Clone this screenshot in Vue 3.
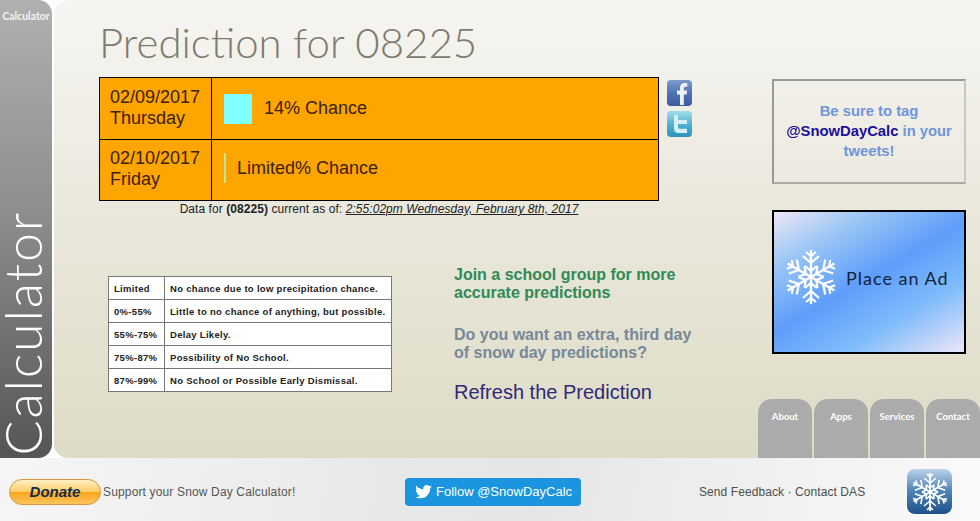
<template>
  <div class="page">
    <div class="top">
      <aside class="sidebar">
        <span class="side-small">Calculator</span>
        <span class="side-big">Calculator</span>
      </aside>

      <main class="panel">
        <div class="body">
          <div class="left">
            <h1 class="title">Prediction for 08225</h1>
            <div class="forecast-row">
              <div class="forecast">
                <div v-for="day in days" :key="day.date" class="day">
                  <div class="day-date">{{ day.date }}<br />{{ day.name }}</div>
                  <div class="day-chance">
                    <span class="swatch" :style="{ width: day.bar + 'px' }"></span>
                    <span>{{ day.chance }}</span>
                  </div>
                </div>
              </div>
              <div class="social">
                <svg width="25" height="26" viewBox="0 0 25 26">
                  <defs>
                    <linearGradient id="fbg" x1="0" y1="0" x2="0" y2="1">
                      <stop offset="0" stop-color="#7d9bc9" />
                      <stop offset="0.5" stop-color="#4f74b4" />
                      <stop offset="1" stop-color="#3b5b9f" />
                    </linearGradient>
                  </defs>
                  <rect width="25" height="26" rx="4" fill="url(#fbg)" />
                  <path d="M13 25V14.500h-3v-4h3V8c0-3.300 2-5 4.800-5 1.200 0 2.200.1 2.500.2v3.500h-1.900c-1.400 0-1.600.7-1.600 1.700v2.100h3.300l-.5 4h-2.800V25z" fill="#eef2f8" />
                </svg>
                <svg width="25" height="26" viewBox="0 0 25 26">
                  <defs>
                    <linearGradient id="twg" x1="0" y1="0" x2="0" y2="1">
                      <stop offset="0" stop-color="#a5dbe8" />
                      <stop offset="0.5" stop-color="#52b4d2" />
                      <stop offset="1" stop-color="#2a93b8" />
                    </linearGradient>
                  </defs>
                  <rect width="25" height="26" rx="4" fill="url(#twg)" />
                  <path d="M7 4h4v5h9v4h-9v3c0 1.200.6 1.700 1.800 1.700H20V22h-8.500C8.600 22 7 20.400 7 17.500z" fill="#d5eff6" />
                </svg>
              </div>
            </div>
            <p class="asof">
              Data for <b>(08225)</b> current as of:
              <u><i>2:55:02pm Wednesday, February 8th, 2017</i></u>
            </p>

            <div class="lower">
              <table class="legend">
                <tbody>
                  <tr v-for="row in legend" :key="row[0]">
                    <td>{{ row[0] }}</td>
                    <td>{{ row[1] }}</td>
                  </tr>
                </tbody>
              </table>
              <div class="links">
                <a class="link-green">Join a school group for more<br />accurate predictions</a>
                <a class="link-grey">Do you want an extra, third day<br />of snow day predictions?</a>
                <a class="link-refresh">Refresh the Prediction</a>
              </div>
            </div>
          </div>

          <div class="right">
            <div class="tag-box">
              Be sure to tag<br />
              <span class="handle">@SnowDayCalc</span> in your<br />
              tweets!
            </div>
            <div class="ad">
              <svg class="flake" width="54" height="56" viewBox="-27 -28 54 56">
                <g v-for="a in angles" :key="a" :transform="`rotate(${a})`" stroke="#fff" fill="none">
                  <path d="M0 0V-27" stroke-width="2.400" />
                  <path d="M-5 -25L0 -21L5 -25M-8 -21L0 -14L8 -21M-6 -11L0 -6L6 -11" stroke-width="2.200" />
                </g>
              </svg>
              <span class="ad-text">Place an Ad</span>
            </div>
          </div>
        </div>

        <nav class="tabs">
          <a v-for="tab in tabs" :key="tab" class="tab">{{ tab }}</a>
        </nav>
      </main>
    </div>

    <footer class="footer">
      <div class="donate-wrap">
        <button class="donate">Donate</button>
        <span class="support">Support your Snow Day Calculator!</span>
      </div>
      <a class="follow">
        <svg width="17" height="14" viewBox="0 0 24 20">
          <path d="M24 2.400c-.9.400-1.800.7-2.800.8 1-.6 1.800-1.600 2.200-2.700-1 .6-2 1-3.100 1.200C19.300.7 18 0 16.600 0c-2.700 0-4.900 2.200-4.900 4.900 0 .4 0 .8.100 1.100C7.700 5.800 4.100 3.900 1.700.9c-.4.700-.7 1.600-.7 2.500 0 1.700.9 3.200 2.200 4.100-.8 0-1.600-.2-2.200-.6v.1c0 2.400 1.700 4.400 3.900 4.800-.4.100-.8.200-1.300.2-.3 0-.6 0-.9-.1.600 2 2.400 3.400 4.600 3.400-1.700 1.300-3.800 2.100-6.100 2.100-.4 0-.8 0-1.200-.1C2.200 18.300 4.800 19.100 7.500 19.100c9.100 0 14-7.500 14-14v-.6c1-.7 1.800-1.600 2.500-2.100z" fill="#fff" />
        </svg>
        Follow @SnowDayCalc
      </a>
      <div class="contact">Send Feedback · Contact DAS</div>
      <div class="app-icon">
        <svg width="38" height="40" viewBox="-19 -20 38 40">
          <g v-for="a in angles" :key="a" :transform="`rotate(${a})`" stroke="#fff" fill="none">
            <path d="M0 0V-19" stroke-width="1.800" />
            <path d="M-3 -18L0 -15L3 -18M-6 -14L0 -9L6 -14M-4 -7L0 -4L4 -7" stroke-width="1.600" />
          </g>
        </svg>
      </div>
    </footer>
  </div>
</template>

<script setup>
const days = [
  { date: '02/09/2017', name: 'Thursday', chance: '14% Chance', bar: 28 },
  { date: '02/10/2017', name: 'Friday', chance: 'Limited% Chance', bar: 2 }
]

const legend = [
  ['Limited', 'No chance due to low precipitation chance.'],
  ['0%-55%', 'Little to no chance of anything, but possible.'],
  ['55%-75%', 'Delay Likely.'],
  ['75%-87%', 'Possibility of No School.'],
  ['87%-99%', 'No School or Possible Early Dismissal.']
]

const tabs = ['About', 'Apps', 'Services', 'Contact']
const angles = [0, 60, 120, 180, 240, 300]
</script>

<style>
html,
body {
  margin: 0;
  background: #fff;
}
</style>

<style scoped>
.page {
  width: 980px;
  height: 521px;
  overflow: hidden;
  display: flex;
  flex-direction: column;
  font-family: 'Liberation Sans', Arial, sans-serif;
  color: #000;
}

.top {
  height: 458px;
  display: flex;
  gap: 2px;
}

.sidebar {
  width: 52px;
  flex: none;
  box-sizing: border-box;
  border-radius: 0 14px 14px 0;
  background: linear-gradient(#b0b0b0, #8f8f8f 45%, #555 100%);
  color: #fff;
  display: flex;
  flex-direction: column;
  justify-content: space-between;
  align-items: center;
  font-family: Lato, 'Open Sans', sans-serif;
}

.side-small {
  font-size: 10.500px;
  font-weight: 700;
  margin-top: 10px;
  color: #f2f2f2;
}

.side-big {
  writing-mode: vertical-rl;
  transform: rotate(180deg);
  font-size: 52px;
  font-weight: 300;
  line-height: 45px;
  letter-spacing: 1.800px;
  margin-bottom: 3px;
  margin-right: 7px;
}

.panel {
  flex: 1;
  border-radius: 14px 0 0 14px;
  background: linear-gradient(#f6f5f2, #e9e7da 50%, #dedbc5);
  display: flex;
  flex-direction: column;
  min-width: 0;
}

.body {
  height: 399px;
  flex: none;
  display: flex;
}

.left {
  width: 600px;
  margin-left: 45px;
  flex: none;
}

.title {
  margin: 0;
  padding-top: 18px;
  height: 77px;
  box-sizing: border-box;
  font-family: Lato, 'Open Sans', sans-serif;
  font-weight: 300;
  font-size: 42px;
  line-height: 48px;
  color: #7d7a70;
  white-space: nowrap;
}

.forecast-row {
  display: flex;
  gap: 8px;
}

.forecast {
  width: 560px;
  box-sizing: border-box;
  border: 1px solid #000;
  background: #ffa500;
  color: #3c2200;
  font-size: 18px;
  line-height: 21px;
}

.day {
  display: flex;
  height: 61px;
}

.day + .day {
  border-top: 1px solid #000;
  height: 60px;
}

.day-date {
  width: 112px;
  box-sizing: border-box;
  padding: 9px 0 0 10px;
  border-right: 1px solid #000;
}

.day + .day .day-date {
  padding-top: 8px;
}

.day-chance {
  flex: 1;
  display: flex;
  align-items: center;
  gap: 12px;
  padding-left: 12px;
}

.day + .day .day-chance {
  gap: 11px;
  padding-bottom: 4px;
}

.swatch {
  height: 30px;
  background: #7fffff;
}

.day + .day .swatch {
  background: #b8e6a0;
}

.social {
  display: flex;
  flex-direction: column;
  gap: 5px;
  padding-top: 3px;
}

.social svg {
  display: block;
}

.asof {
  margin: 1px 0 0;
  width: 560px;
  text-align: center;
  font-size: 12px;
  line-height: 15px;
  letter-spacing: 0.060px;
  color: #222;
}

.lower {
  display: flex;
  margin-top: 59px;
  margin-left: 9px;
}

.legend {
  width: 284px;
  height: 116px;
  border-collapse: collapse;
  background: #fff;
  font-size: 9.500px;
  font-weight: 700;
  color: #222;
  flex: none;
}

.legend td {
  border: 1px solid #777;
  padding: 0 5px;
  white-space: nowrap;
  letter-spacing: 0.300px;
}

.legend td:first-child {
  width: 45px;
}

.links {
  margin-left: 62px;
  margin-top: -10px;
  display: flex;
  flex-direction: column;
  font-weight: 700;
  font-size: 16px;
  line-height: 18px;
}

.link-green {
  color: #2e8b57;
}

.link-grey {
  color: #778899;
  margin-top: 24px;
}

.link-refresh {
  color: #2e2a78;
  font-weight: 400;
  font-size: 20px;
  line-height: 24px;
  margin-top: 18px;
}

.right {
  margin-left: 73px;
  width: 194px;
  flex: none;
  padding-top: 79px;
}

.tag-box {
  width: 194px;
  height: 105px;
  box-sizing: border-box;
  border: 2px solid;
  border-color: #9a9a92 #c9c8c0 #aaaaa2 #9a9a92;
  padding-top: 20px;
  text-align: center;
  font-weight: 700;
  font-size: 14.800px;
  line-height: 20px;
  color: #6f95dc;
}

.handle {
  color: #1a0f9c;
}

.ad {
  margin-top: 26px;
  width: 194px;
  height: 144px;
  box-sizing: border-box;
  border: 2px solid #000;
  background: linear-gradient(150deg, #efe6f5 0%, #9cc7f5 22%, #5e9dfb 48%, #7fbcfb 72%, #efe6f7 100%);
  display: flex;
  align-items: center;
  gap: 8px;
  padding: 0 0 11px 10px;
  font-family: Lato, 'Open Sans', sans-serif;
  color: #10243c;
}

.flake {
  flex: none;
}

.ad-text {
  font-size: 18px;
  letter-spacing: 1px;
  padding-top: 3px;
  white-space: nowrap;
}

.tabs {
  display: flex;
  justify-content: flex-end;
  gap: 2px;
}

.tab {
  width: 54px;
  height: 59px;
  box-sizing: border-box;
  padding-top: 12px;
  border-radius: 14px 14px 0 0;
  background: #acabab;
  color: #fff;
  text-align: center;
  font-family: Lato, 'Open Sans', sans-serif;
  font-size: 9.500px;
  font-weight: 700;
}

.footer {
  flex: 1;
  display: flex;
  align-items: center;
  padding-top: 4px;
  background: linear-gradient(100deg, #f6f6f6, #e8e8ea 40%, #e6e6e6 55%, #fafafa);
  color: #555;
  font-size: 12px;
}

.donate-wrap {
  display: flex;
  align-items: center;
  gap: 2px;
  margin-left: 9px;
  width: 396px;
  flex: none;
}

.support {
  letter-spacing: 0.150px;
}

.donate {
  width: 92px;
  height: 26px;
  padding: 0;
  border: 1px solid #d99a3c;
  border-radius: 13px;
  background: linear-gradient(#fff0c4, #ffcd68 48%, #f9a51d 52%, #fdc55c);
  color: #142c4e;
  font: italic 700 15px 'Liberation Sans', Arial, sans-serif;
}

.follow {
  width: 176px;
  height: 28px;
  flex: none;
  box-sizing: border-box;
  border-radius: 4px;
  background: #1b95e0;
  color: #fff;
  font-size: 13px;
  display: flex;
  align-items: center;
  gap: 4px;
  padding-left: 10px;
}

.contact {
  margin-left: 118px;
  width: 208px;
  flex: none;
  color: #4e4e4e;
  letter-spacing: 0.080px;
}

.app-icon {
  width: 45px;
  height: 45px;
  flex: none;
  border-radius: 8px;
  background: linear-gradient(#bcd3e8, #4c82b4 50%, #1d5287);
  display: flex;
  align-items: center;
  justify-content: center;
}
</style>
